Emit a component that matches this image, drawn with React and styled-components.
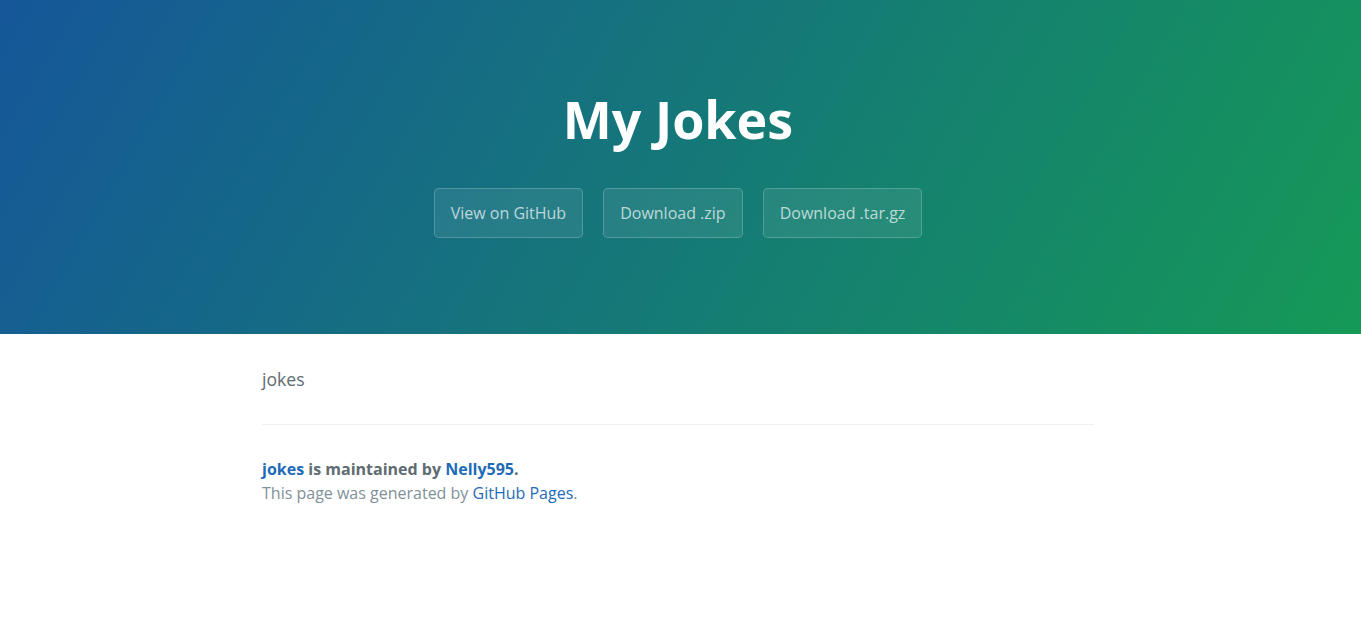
import React from "react";
import styled, { createGlobalStyle } from "styled-components";

const GlobalStyle = createGlobalStyle`
	html, body {
		margin: 0;
		padding: 0;
		background: #fff;
	}
	body {
		font-family: "Open Sans", "Liberation Sans", Arial, sans-serif;
		font-size: 16px;
		line-height: 1.5;
		color: #606c71;
	}
`;

const PageHeader = styled.section`
	color: #fff;
	text-align: center;
	background-color: #159957;
	background-image: linear-gradient(120deg, #155799, #159957);
	padding: 80px 101px 80px 96px;
`;

const Title = styled.h1`
	margin: 0 0 30px;
	font-size: 52px;
	font-weight: 700;
	line-height: 1.5;
`;

const Buttons = styled.div`
	display: flex;
	justify-content: center;
	gap: 20px;
	margin-bottom: 16px;
`;

const Btn = styled.a`
	display: inline-block;
	padding: 12px 16px;
	font-size: 16px;
	line-height: 24px;
	color: rgba(255, 255, 255, 0.7);
	text-decoration: none;
	background-color: rgba(255, 255, 255, 0.08);
	border: 1px solid rgba(255, 255, 255, 0.2);
	border-radius: 4.8px;
	cursor: pointer;
`;

const Body = styled.div`
	padding-right: 5px;
`;

const MainContent = styled.section`
	max-width: 1024px;
	margin: 0 auto;
	padding: 32px 96px;
	box-sizing: border-box;
	font-size: 17.6px;
	word-wrap: break-word;
`;

const Para = styled.p`
	margin: 0;
	line-height: 26.4px;
`;

const Footer = styled.footer`
	margin-top: 32px;
	padding-top: 32px;
	border-top: 1px solid #eff0f1;
	font-size: 16px;
	line-height: 24px;
`;

const Owner = styled.span`
	display: block;
	font-weight: 700;
`;

const Credits = styled.span`
	color: #819198;
`;

const Link = styled.a`
	color: #1e6bb8;
	text-decoration: none;
`;

export default function App() {
	return (
		<>
			<GlobalStyle />
			<PageHeader>
				<Title>My Jokes</Title>
				<Buttons>
					<Btn>View on GitHub</Btn>
					<Btn>Download .zip</Btn>
					<Btn>Download .tar.gz</Btn>
				</Buttons>
			</PageHeader>
			<Body>
				<MainContent>
					<Para>jokes</Para>
					<Footer>
						<Owner>
							<Link>jokes</Link> is maintained by <Link>Nelly595</Link>.
						</Owner>
						<Credits>
							This page was generated by <Link>GitHub Pages</Link>.
						</Credits>
					</Footer>
				</MainContent>
			</Body>
		</>
	);
}
